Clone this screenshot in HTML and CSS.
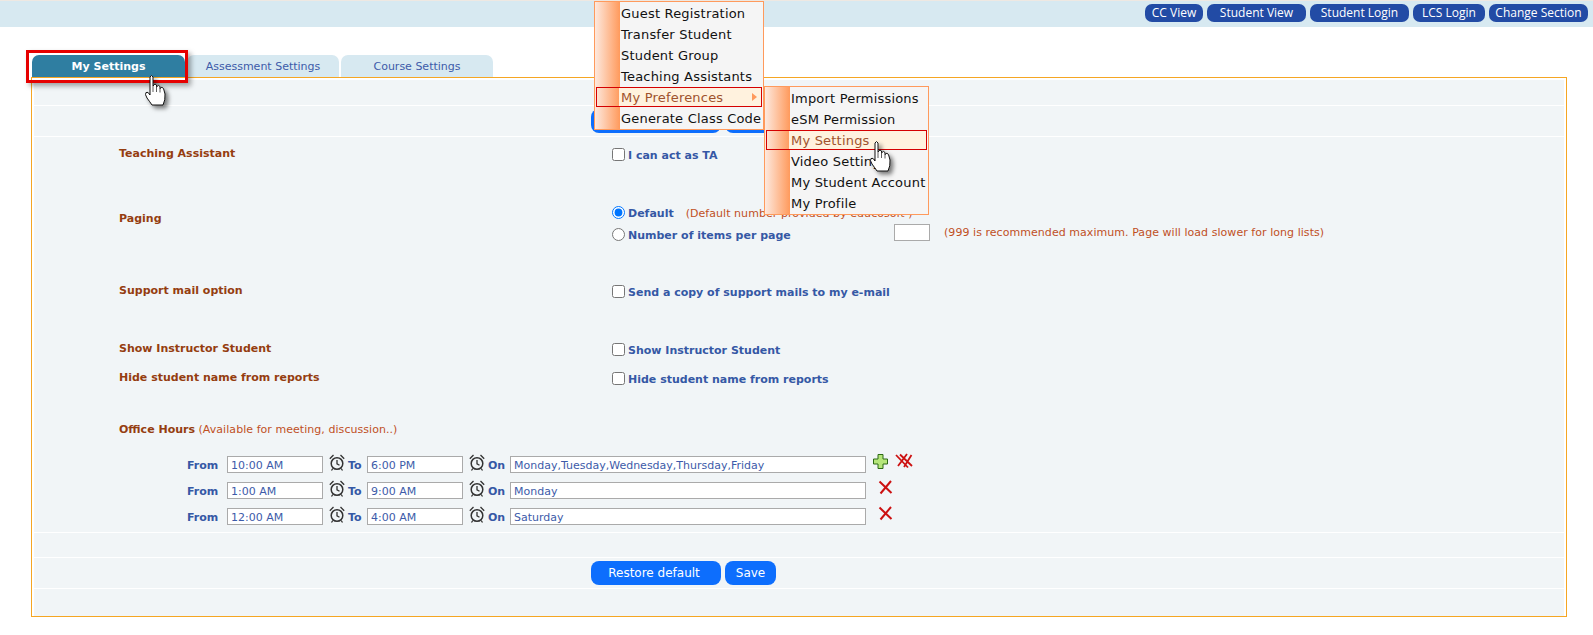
FILE: index.html
```html
<!DOCTYPE html>
<html lang="en">
<head>
<meta charset="utf-8">
<title>My Settings</title>
<link rel="stylesheet" href="styles.css">
</head>
<body>
<svg class="defs" width="0" height="0" aria-hidden="true">
  <symbol id="hand" viewBox="0 0 22 32">
    <path d="M5 19V3Q6.5 0 8 3V12Q10 8.5 11.5 11V13Q13.5 10 15 12.5V14.5Q17 12 18.5 14.5L20 20Q20.5 26 18 31H7Q5 28 2 24Q-.5 20 1 18.5Q3 17 5 21Z" fill="#fff" stroke="#111" stroke-width="1"/>
    <path d="M11.5 12V18M15 14V18.500M8 12V18" fill="none" stroke="#333" stroke-width=".8"/>
  </symbol>
  <symbol id="clock" viewBox="0 0 16 17">
    <circle cx="8" cy="9.500" r="5.800" fill="none" stroke="#333" stroke-width="1.500"/>
    <path d="M8 6V9.800L10.500 11.200M.8 4.800L4.500 1M11.500 1L15.200 4.800M3.800 14.500L2.500 16.500M12.200 14.500L13.500 16.500" fill="none" stroke="#333" stroke-width="1.300"/>
  </symbol>
  <symbol id="cross" viewBox="0 0 15 15">
    <path d="M1.500 1.500L13.500 13M13 1L2.500 13.500" fill="none" stroke="#cc1111" stroke-width="2"/>
  </symbol>
  <symbol id="crossdbl" viewBox="0 0 18 16">
    <path d="M1 2L13 14.500M12 1L3 13M5 1.500L17 13M16.500 2L9 14" fill="none" stroke="#cc1111" stroke-width="1.800"/>
  </symbol>
  <symbol id="plus" viewBox="0 0 15 15">
    <path d="M5 .5H10V5H14.500V10H10V14.500H5V10H.5V5H5Z" fill="#b5e67a" stroke="#2c6a14" stroke-width="1"/>
  </symbol>
</svg>

<header class="topbar">
  <a class="top-btn w-cc">CC View</a>
  <a class="top-btn w-sv">Student View</a>
  <a class="top-btn w-sl">Student Login</a>
  <a class="top-btn w-lcs">LCS Login</a>
  <a class="top-btn w-cs">Change Section</a>
</header>

<nav class="tabs">
  <a class="tab tab-active">My Settings</a>
  <a class="tab">Assessment Settings</a>
  <a class="tab">Course Settings</a>
</nav>

<main class="panel">
  <div class="band band-top"></div>
  <div class="band band-actions">
    <button class="btn btn-restore">Restore default</button>
    <button class="btn btn-save">Save</button>
  </div>
  <div class="band band-main">
    <section class="field field-ta">
      <div class="label">Teaching Assistant</div>
      <div class="control"><label class="opt"><input type="checkbox"><span>I can act as TA</span></label></div>
    </section>
    <section class="field field-paging">
      <div class="label">Paging</div>
      <div class="control control-paging">
        <label class="opt"><input type="radio" name="paging" checked><span>Default</span><em class="hint hint-default">(Default number provided by educosoft )</em></label>
        <label class="opt opt-number"><input type="radio" name="paging"><span class="num-label">Number of items per page</span><input class="num-input" type="text"><em class="hint">(999 is recommended maximum. Page will load slower for long lists)</em></label>
      </div>
    </section>
    <section class="field field-support">
      <div class="label">Support mail option</div>
      <div class="control"><label class="opt"><input type="checkbox"><span>Send a copy of support mails to my e-mail</span></label></div>
    </section>
    <section class="field field-show">
      <div class="label">Show Instructor Student</div>
      <div class="control"><label class="opt"><input type="checkbox"><span>Show Instructor Student</span></label></div>
    </section>
    <section class="field field-hide">
      <div class="label">Hide student name from reports</div>
      <div class="control"><label class="opt"><input type="checkbox"><span>Hide student name from reports</span></label></div>
    </section>
    <div class="office-title"><b>Office Hours</b> <em class="hint">(Available for meeting, discussion..)</em></div>
    <div class="hours">
      <div class="hour-row">
        <b class="h-from">From</b><input class="time" value="10:00 AM"><svg class="clock"><use href="#clock"/></svg>
        <b class="h-to">To</b><input class="time" value="6:00 PM"><svg class="clock"><use href="#clock"/></svg>
        <b class="h-on">On</b><input class="days" value="Monday,Tuesday,Wednesday,Thursday,Friday">
        <svg class="ic-plus"><use href="#plus"/></svg><svg class="ic-dbl"><use href="#crossdbl"/></svg>
      </div>
      <div class="hour-row">
        <b class="h-from">From</b><input class="time" value="1:00 AM"><svg class="clock"><use href="#clock"/></svg>
        <b class="h-to">To</b><input class="time" value="9:00 AM"><svg class="clock"><use href="#clock"/></svg>
        <b class="h-on">On</b><input class="days" value="Monday">
        <svg class="ic-x"><use href="#cross"/></svg>
      </div>
      <div class="hour-row">
        <b class="h-from">From</b><input class="time" value="12:00 AM"><svg class="clock"><use href="#clock"/></svg>
        <b class="h-to">To</b><input class="time" value="4:00 AM"><svg class="clock"><use href="#clock"/></svg>
        <b class="h-on">On</b><input class="days" value="Saturday">
        <svg class="ic-x"><use href="#cross"/></svg>
      </div>
    </div>
  </div>
  <div class="band band-gap"></div>
  <div class="band band-actions">
    <button class="btn btn-restore">Restore default</button>
    <button class="btn btn-save">Save</button>
  </div>
  <div class="band band-end"></div>
</main>

<div class="callout"></div>
<svg class="cursor cursor-tab"><use href="#hand"/></svg>

<ul class="menu menu-main">
  <li>Guest Registration</li>
  <li>Transfer Student</li>
  <li>Student Group</li>
  <li>Teaching Assistants</li>
  <li class="on has-sub">My Preferences</li>
  <li>Generate Class Code</li>
</ul>
<ul class="menu menu-sub">
  <li>Import Permissions</li>
  <li>eSM Permission</li>
  <li class="on">My Settings</li>
  <li>Video Settings</li>
  <li>My Student Account</li>
  <li>My Profile</li>
</ul>
<svg class="cursor cursor-menu"><use href="#hand"/></svg>
</body>
</html>
```

FILE: styles.css
```css
* { box-sizing: border-box; }
html, body { margin: 0; padding: 0; }
body {
  position: relative;
  height: 635px;
  overflow: hidden;
  background: #fff;
  font-family: "DejaVu Sans", Verdana, sans-serif;
  font-size: 11px;
  color: #3558a5;
}
.defs { position: absolute; }

.topbar {
  display: flex;
  justify-content: flex-end;
  gap: 4px;
  height: 27px;
  padding: 3px 5px 0 0;
  background: #d7e9f1;
  border-top: 1px solid #eee8e2;
}
.top-btn {
  height: 18px;
  background: #224ba5;
  border-radius: 7px;
  color: #fff;
  font: 12px/17px "Open Sans", sans-serif;
  text-align: center;
}
.w-cc { width: 58px; }
.w-sv { width: 99px; }
.w-sl { width: 99px; }
.w-lcs { width: 72px; }
.w-cs { width: 99px; }

.tabs {
  display: flex;
  gap: 2px;
  height: 22px;
  margin-top: 28px;
  padding-left: 32px;
}
.tab {
  width: 152px;
  height: 22px;
  padding-top: 3px;
  background: #d7e9f1;
  border-radius: 7px 7px 0 0;
  color: #3d5ba9;
  font-size: 11px;
  line-height: 18px;
  text-align: center;
}
.tab-active {
  width: 153px;
  background: #2f7ea1;
  color: #fff;
  font-weight: bold;
}

.panel {
  width: 1536px;
  height: 540px;
  margin-left: 31px;
  padding: 2px 2px 0;
  background: #fff;
  border: 1px solid #f5a623;
}
.band {
  background: #f1f5f7;
  border-bottom: 1px solid #fff;
}
.band-top { height: 26px; }
.band-actions {
  display: flex;
  gap: 4px;
  height: 31px;
  padding: 3px 0 0 557px;
}
.band-main { height: 396px; }
.band-gap { height: 25px; }
.band-end { height: 27px; border-bottom: 0; }

.btn {
  height: 24px;
  padding: 0;
  background: #0d6efd;
  border: 0;
  border-radius: 8px;
  color: #fff;
  font: 12px/24px "DejaVu Sans", sans-serif;
}
.btn-restore { width: 130px; padding-right: 4px; }
.btn-save { width: 51px; }

.field {
  display: grid;
  grid-template-columns: 493px 1fr;
  padding: 9px 0 0 85px;
}
.label {
  color: #953d10;
  font-weight: bold;
  line-height: 16px;
}
.control { margin-top: 1px; }
.field-ta { height: 65px; }
.field-paging { height: 72px; }
.field-support { height: 58px; }
.field-show { height: 29px; }
.field-hide { height: 52px; }

.opt {
  display: flex;
  align-items: center;
  height: 16px;
  color: #3558a5;
  font-weight: bold;
}
.opt input[type="checkbox"], .opt input[type="radio"] {
  flex: none;
  width: 13px;
  height: 13px;
  margin: 0 3px 2px 0;
}
.control-paging { margin-top: -6px; }
.opt-number { margin-top: 6px; }
.num-label { width: 266px; }
.opt input.num-input {
  position: relative;
  top: -3px;
  width: 36px;
  height: 17px;
  margin: 0;
  background: #fff;
  border: 1px solid #aaa;
}
.hint {
  color: #c0501f;
  font-size: 11px;
  font-style: normal;
  font-weight: normal;
  letter-spacing: .05px;
}
.hint-default { margin-left: 12px; }
.opt-number .hint { position: relative; top: -3px; margin-left: 14px; }

.office-title {
  height: 43px;
  padding: 9px 0 0 85px;
  color: #953d10;
  line-height: 16px;
}
.hours { padding-left: 153px; }
.hour-row {
  display: flex;
  align-items: center;
  height: 26px;
  padding-bottom: 9px;
}
.hour-row b { margin-top: 1px; color: #3558a5; font-size: 11px; }
.h-from { width: 40px; }
.h-to { width: 19px; }
.h-on { width: 22px; }
.time, .days {
  height: 17px;
  padding: 1px 3px 0;
  background: #fff;
  border: 1px solid #aaa;
  color: #3d5ba9;
  font: 11px "DejaVu Sans", sans-serif;
  outline: 0;
}
.time { width: 96px; }
.days { width: 356px; }
.clock { width: 16px; height: 17px; margin: -5px 3px 0 6px; }
.ic-plus { width: 15px; height: 15px; margin: -6px 0 0 7px; }
.ic-dbl { width: 18px; height: 16px; margin: -7px 0 0 7px; }
.ic-x { width: 15px; height: 15px; margin: -7px 0 0 12px; }

.callout {
  position: absolute;
  left: 26px;
  top: 50px;
  width: 162px;
  height: 33px;
  border: 3px solid #e60000;
  box-shadow: 3px 3px 5px rgba(0, 0, 0, .35);
}
.cursor {
  position: absolute;
  width: 22px;
  height: 32px;
  filter: drop-shadow(3px 3px 2px rgba(0, 0, 0, .5));
}
.cursor-tab { left: 145px; top: 74px; }
.cursor-menu { left: 870px; top: 140px; }

.menu {
  position: absolute;
  margin: 0;
  padding: 2px 1px 0;
  list-style: none;
  background: linear-gradient(90deg, #fde9df 0, #ff9a5c 25px, #f5f5f5 25px);
  border: 1px solid #ff9a5c;
  color: #111;
  font-size: 13px;
  letter-spacing: .2px;
}
.menu-main { left: 594px; top: 1px; width: 170px; height: 129px; }
.menu-sub { left: 764px; top: 86px; width: 165px; height: 129px; }
.menu li {
  height: 21px;
  padding-left: 25px;
  line-height: 19px;
  white-space: nowrap;
}
.menu .on {
  position: relative;
  height: 20px;
  margin: -1px 0 2px;
  padding-top: 1px;
  background: linear-gradient(90deg, transparent 0, transparent 23px, #fff2de 23px);
  outline: 1px solid #d50000;
  outline-offset: -1px;
  color: #a0522d;
}
.has-sub::after {
  content: "";
  position: absolute;
  right: 5px;
  top: 6px;
  border-left: 5px solid #ff9a5c;
  border-top: 4px solid transparent;
  border-bottom: 4px solid transparent;
}
```
